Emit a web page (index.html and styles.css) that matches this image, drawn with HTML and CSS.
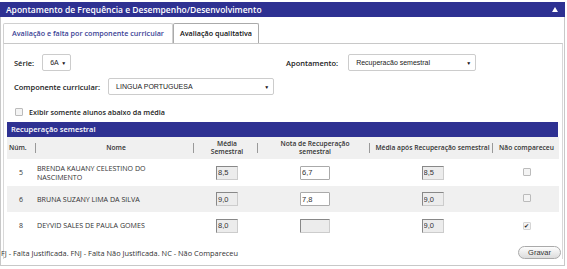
FILE: index.html
```html
<!DOCTYPE html>
<html lang="pt-BR">
<head>
  <meta charset="UTF-8">
  <title>Apontamento de Frequência e Desempenho/Desenvolvimento</title>
  <link rel="stylesheet" href="styles.css">
</head>
<body>
  <div class="panel">
    <div class="panel-header">
      <span>Apontamento de Frequência e Desempenho/Desenvolvimento</span>
      <span class="toggle"></span>
    </div>

    <div class="tabs">
      <div class="tab active">Avaliação e falta por componente curricular</div>
      <div class="tab">Avaliação qualitativa</div>
    </div>

    <div class="tab-content">
      <div class="filters">
        <div class="field">
          <label>Série:</label>
          <div class="select small">6A <span class="arrow">▼</span></div>
        </div>
        <div class="field right">
          <label>Apontamento:</label>
          <div class="select medium">Recuperacão semestral <span class="arrow">▼</span></div>
        </div>
      </div>
      <div class="filters">
        <div class="field">
          <label>Componente curricular:</label>
          <div class="select wide">LINGUA PORTUGUESA <span class="arrow">▼</span></div>
        </div>
      </div>
      <div class="check-row">
        <span class="check"></span>
        <label class="small-label">Exibir somente alunos abaixo da média</label>
      </div>

      <div class="grid-title">Recuperação semestral</div>
      <table class="grid">
        <colgroup>
          <col style="width:30px">
          <col style="width:158px">
          <col style="width:64px">
          <col style="width:112px">
          <col style="width:123px">
          <col style="width:65px">
        </colgroup>
        <thead>
          <tr>
            <th class="first">Núm.</th>
            <th>Nome</th>
            <th>Média<br>Semestral</th>
            <th>Nota de Recuperação<br>semestral</th>
            <th>Média após Recuperação semestral</th>
            <th class="last">Não compareceu</th>
          </tr>
        </thead>
        <tbody>
          <tr>
            <td class="num">5</td>
            <td class="name">BRENDA KAUANY CELESTINO DO<br>NASCIMENTO</td>
            <td class="c"><input class="ro" value="8,5" readonly></td>
            <td class="c"><input class="edit" value="6,7"></td>
            <td class="c"><input class="ro" value="8,5" readonly></td>
            <td class="c"><span class="check"></span></td>
          </tr>
          <tr class="alt">
            <td class="num">6</td>
            <td class="name">BRUNA SUZANY LIMA DA SILVA</td>
            <td class="c"><input class="ro" value="9,0" readonly></td>
            <td class="c"><input class="edit" value="7,8"></td>
            <td class="c"><input class="ro" value="9,0" readonly></td>
            <td class="c"><span class="check"></span></td>
          </tr>
          <tr>
            <td class="num">8</td>
            <td class="name">DEYVID SALES DE PAULA GOMES</td>
            <td class="c"><input class="ro" value="8,0" readonly></td>
            <td class="c"><input class="edit off" value="" readonly></td>
            <td class="c"><input class="ro" value="9,0" readonly></td>
            <td class="c"><span class="check on">✔</span></td>
          </tr>
        </tbody>
      </table>

      <div class="footer-row">
        <span class="legend">FJ - Falta Justificada. FNJ - Falta Não Justificada. NC - Não Compareceu</span>
        <button class="btn">Gravar</button>
      </div>
    </div>
  </div>
</body>
</html>
```

FILE: styles.css
```css
body {
  margin: 0;
  padding: 2px 0 0 0;
  font-family: 'Open Sans', sans-serif;
  color: #333;
  background: #fff;
}
.panel {
  width: 565px;
  border: 1px solid #c8c8c8;
  border-top: none;
  height: 264px;
  box-sizing: border-box;
}
.panel-header {
  display: flex;
  justify-content: space-between;
  align-items: center;
  height: 15px;
  margin: 0 -1px;
  padding: 0 7px 0 6px;
  background: #2e3192;
  color: #fff;
  font-size: 8.5px;
  font-weight: 600;
}
.toggle {
  width: 0;
  height: 0;
  border-left: 3.5px solid transparent;
  border-right: 3.5px solid transparent;
  border-bottom: 5px solid #fff;
}
.tabs {
  display: flex;
  margin: 6px 0 0 2px;
  height: 20px;
}
.tab {
  padding: 0 6px;
  line-height: 19px;
  font-size: 7.2px;
  font-weight: 600;
  color: #111;
  white-space: nowrap;
  border: 1px solid #aaa;
  border-bottom: none;
  border-radius: 2px 2px 0 0;
  background: #fff;
}
.tab.active {
  padding: 0 8px 0 8px;
  color: #3b3f95;
  border-color: #d0d0d0;
}
.tab-content {
  margin: 0 1px 0 2px;
  border-top: 1px solid #c8c8c8;
  border-left: 1px solid #d8d8d8;
  border-right: 1px solid #d8d8d8;
  padding: 0 4px 0 3px;
}
.filters {
  display: flex;
  margin-top: 10px;
}
.filters + .filters {
  margin-top: 7px;
}
.field {
  display: flex;
  align-items: center;
  gap: 8px;
  width: 276px;
  padding-left: 7px;
}
.field.right {
  padding-left: 0;
  gap: 10px;
}
label {
  font-size: 7.5px;
  font-weight: 600;
  color: #222;
}
label.small-label {
  font-size: 7.2px;
}
.select {
  display: flex;
  justify-content: space-between;
  align-items: center;
  height: 15px;
  padding: 0 4px 0 7px;
  border: 1px solid #ccc;
  border-radius: 2px;
  font-family: 'Liberation Sans', sans-serif;
  font-size: 7px;
  color: #222;
}
.select.small { width: 16px; }
.select.medium { width: 115px; }
.select.wide { width: 153px; }
.arrow {
  font-size: 5px;
  color: #111;
}
.check-row {
  display: flex;
  align-items: center;
  gap: 6px;
  margin: 11px 0 0 8px;
  height: 12px;
}
.check {
  display: inline-block;
  width: 6px;
  height: 6px;
  border: 1px solid #bbb;
  border-radius: 1px;
  background: #f4f4f4;
  font-size: 6px;
  line-height: 6px;
  text-align: center;
  color: #222;
}
.check.on {
  border-color: #d5d5d5;
}
.grid-title {
  margin-top: 4px;
  height: 15px;
  line-height: 15px;
  padding-left: 4px;
  background: #2e3192;
  color: #fff;
  font-size: 7.5px;
  font-weight: 600;
}
.grid {
  width: 552px;
  border-collapse: collapse;
  table-layout: fixed;
  font-size: 7px;
}
.grid th {
  position: relative;
  height: 22px;
  padding: 0;
  background: #f0f0f0;
  font-size: 6.7px;
  font-weight: 600;
  color: #333;
  line-height: 8px;
  white-space: nowrap;
}
.grid th::after {
  content: "";
  position: absolute;
  right: 1px;
  top: 6px;
  height: 10px;
  border-right: 1px solid #999;
}
.grid th.first {
  text-align: left;
  padding-left: 2px;
}
.grid th.last::after {
  display: none;
}
.grid td {
  height: 27px;
  padding: 0;
  color: #333;
}
.grid tr.alt td {
  background: #f0f0f0;
  height: 26px;
}
.grid td.num {
  padding-left: 12px;
}
.grid td.name {
  line-height: 9px;
  font-size: 7.1px;
}
.grid td.c {
  text-align: center;
}
input {
  box-sizing: border-box;
  height: 14px;
  padding: 0 1px;
  font-family: 'Liberation Sans', sans-serif;
  font-size: 7.5px;
  color: #333;
}
input.ro {
  width: 22px;
  border: 1px solid #ccc;
  border-top-color: #888;
  border-left-color: #888;
  background: #ececec;
}
input.edit {
  width: 30px;
  border: 1px solid #aaa;
  border-radius: 1px;
  background: #fff;
}
input.edit.off {
  background: #ececec;
  border-color: #ccc;
  border-top-color: #888;
  border-left-color: #888;
}
.footer-row {
  display: flex;
  justify-content: space-between;
  align-items: center;
  margin: 7px -3px 0 -6px;
}
.legend {
  font-size: 7.4px;
  color: #333;
}
.btn {
  height: 13px;
  padding: 0 9px;
  border: 1px solid #aaa;
  border-radius: 7px;
  background: linear-gradient(#fdfdfd, #dcdcdc);
  font-family: 'Liberation Sans', sans-serif;
  font-size: 7.5px;
  color: #333;
}
```
